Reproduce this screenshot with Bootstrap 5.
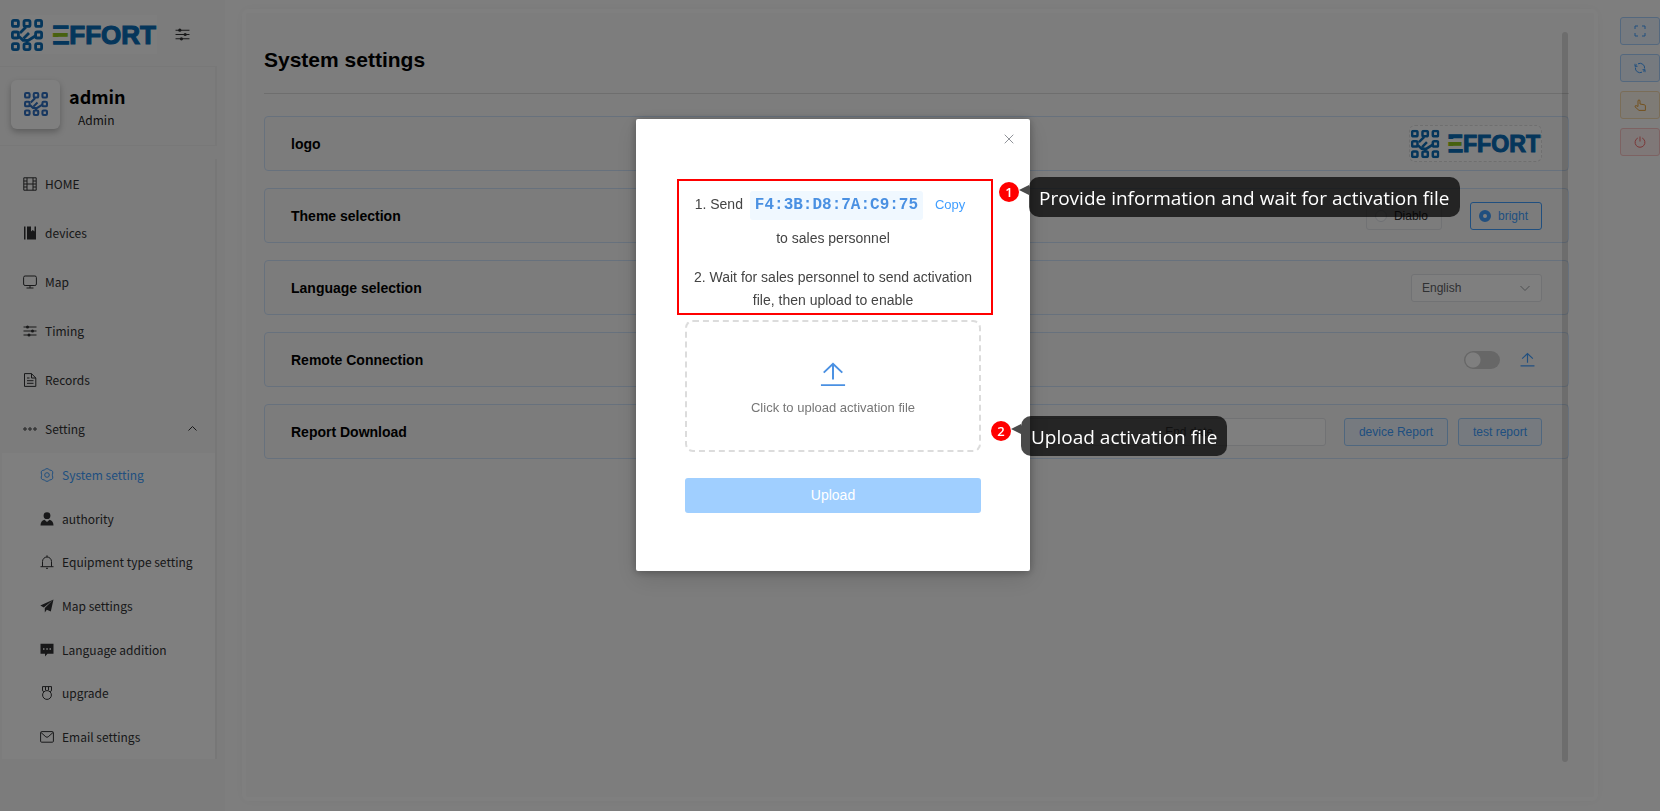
<!DOCTYPE html>
<html lang="en">
<head>
<meta charset="utf-8">
<meta name="viewport" content="width=device-width, initial-scale=1">
<title>System settings</title>
<link rel="stylesheet" href="https://cdn.jsdelivr.net/npm/bootstrap@5.3.0/dist/css/bootstrap.min.css">
<style>
  :root { --ui: "Liberation Sans", Arial, sans-serif; --side: "Noto Sans CJK SC", "Noto Sans", sans-serif; --note: "Open Sans", "Noto Sans", sans-serif; }
  body { font-family: var(--ui); font-size: 14px; line-height: 20px; color: #303133; background: #fdfdfd; }
  .ico { fill: none; stroke: currentColor; stroke-width: 1; flex: none; display: block; }

  /* sidebar */
  .side { width: 225px; flex: none; background: #f8f8f8; font-family: var(--side); font-size: 12px; }
  .side-top { height: 66px; padding: 3px 0 0 10px; gap: 18px; }
  .logo-box { background: #fdfdfd; }
  .plain-btn { border: 0; background: none; padding: 0; color: inherit; }
  .user-box { width: 217px; height: 80px; margin-bottom: 13px; padding: 0 0 0 11px; gap: 9px; border: solid #f1f1f1; border-width: 1px 2px 1px 0; }
  .avatar { width: 49px; height: 49px; margin-bottom: 4px; border-radius: 6px; background: #fff; box-shadow: 0 3px 6px rgba(0,0,0,.25); }
  .user-name { font-size: 18px; line-height: 28px; font-weight: 700; color: #000; }
  .user-role { padding-left: 9px; color: #222; line-height: 20px; }
  .menu-list { width: 217px; border-right: 2px solid #efefef; }
  .menu-link { height: 49px; padding: 0 18px 0 23px; gap: 8px; color: #303133; text-decoration: none; }
  .sub-list { margin-left: 2px; min-height: 306px; background: #fff; }
  .sub-link { padding: 0 10px 0 38px; gap: 8px; color: #303133; text-decoration: none; }
  .sub-link.on { color: #409eff; }

  /* content */
  .panel { margin: 9px 22px 10px 17px; border: 4px solid #fefefe; border-radius: 6px; background: #fbfbfb; box-shadow: 0 0 12px rgba(0,0,0,.04); padding: 19px 25px 35px 18px; }
  .scroller { position: relative; }
  .bar-thumb { position: absolute; top: 0; bottom: 0; right: 1px; width: 6px; border-radius: 3px; background: rgba(0,0,0,.13); }
  .page-title { font-size: 21px; line-height: 30px; font-weight: 700; color: #000; margin: 0 0 22px; padding: 13px 0 18px; border-bottom: 1px solid #dcdcdc; }
  .setting { min-height: 55px; margin-bottom: 17px; padding: 0 26px; border: 1px solid #cfe3fa; border-radius: 4px; background: #f9f9f9; }
  .setting h2 { font-size: 14px; line-height: 20px; font-weight: 700; color: #000; margin: 0; }
  .logo-drop { border: 1px dashed #dedede; border-radius: 6px; background: #fdfdfd; }
  .themes { gap: 28px; }
  .choice { height: 28px; padding: 0 13px 0 8px; gap: 7px; border: 1px solid #e2e4e8; border-radius: 3px; font-size: 12px; cursor: pointer; }
  .choice input { appearance: none; width: 12px; height: 12px; margin: 0; border: 1px solid #dcdfe6; border-radius: 50%; background: #fff; }
  .choice.on { border-color: #409eff; color: #409eff; }
  .choice.on input { border: 4px solid #409eff; }
  .lang { width: 131px; height: 28px; padding: 0 30px 0 10px; border: 1px solid #e2e4e8; border-radius: 3px; font-size: 12px; color: #606266; appearance: none;
    background: #fff url("data:image/svg+xml,%3Csvg xmlns='http://www.w3.org/2000/svg' width='10' height='10' fill='none' stroke='%239a9da3'%3E%3Cpath d='M.5 3 5 7.500 9.500 3'/%3E%3C/svg%3E") no-repeat right 11px center; }
  .remote { gap: 20px; padding-right: 7px; }
  .toggle { appearance: none; width: 36px; height: 18px; margin: 0; border-radius: 9px; background: radial-gradient(circle at 9px 9px, #fff 7px, #cecece 8px); }
  .up-small { stroke: #409eff; stroke-width: 2.2; }
  .dates { width: 440px; height: 28px; margin-right: 18px; padding: 0 35px 0 0; border: 1px solid #e2e4e8; border-radius: 3px; background: #fff; }
  .dates input { min-width: 0; width: 50%; border: 0; background: none; padding: 0; font-size: 12px; text-align: center; }
  .reports { gap: 10px; }
  .soft-btn { height: 28px; padding: 0 14px; border: 1px solid #9fceff; border-radius: 3px; background: #ecf5ff; color: #409eff; font-size: 12px; }

  /* quick actions on the right edge */
  .quick { width: 40px; flex: none; padding-top: 17px; gap: 9px; }
  .quick button { width: 40px; height: 28px; padding: 0; border: 1px solid #a9d1fc; border-radius: 3px; background: #ecf5ff; color: #409eff; }
  .quick .warn { border-color: #f5dab1; background: #fdf6ec; color: #e6a23c; }
  .quick .stop { border-color: #fbc4c4; background: #fef0f0; color: #f56c6c; }

  /* dialog */
  .shade { background: rgba(0,0,0,.5); padding-left: 6px; overflow: hidden; }
  .shade .modal-dialog { max-width: 394px; margin: 119px auto; }
  .shade .modal-content { border: 0; border-radius: 2px; box-shadow: 0 1px 8px rgba(0,0,0,.3), 0 8px 24px rgba(0,0,0,.12); padding: 13px 37px 58px 41px; }
  .close-x { color: #909399; margin-right: -23px; padding: 2px; }
  .guide { position: relative; margin-top: 33px; padding: 10px 12px 1px 8px; border: 2px solid #f00; font-size: 14px; line-height: 23px; color: #444; text-align: center; }
  .guide ol { list-style: none; margin: 0; padding: 0; }
  .mac { display: inline-block; margin: 0 3px 7px; padding: 3px 5px; border-radius: 3px; background: #f0f8ff; color: #4a90e2; font: 700 16px/23px "Liberation Mono", monospace; }
  .copy-btn { border: 0; background: none; padding: 0 6px 0 5px; color: #409eff; font-size: 13px; line-height: 23px; }
  .drop { position: relative; margin: 5px 12px 0 8px; }
  .drop label { height: 132px; border: 2px dashed #dcdcdc; border-radius: 8px; color: #777; font-size: 13px; cursor: pointer; padding-top: 6px; gap: 10px; }
  .up-large { stroke: #4a90e2; stroke-width: 2.1; }
  .send-btn { margin: 26px 12px 0 8px; height: 35px; padding: 0 0 2px; border: 0; border-radius: 3px; background: #a0cfff; color: #fff; }
  .pin { position: absolute; width: 20px; height: 20px; border-radius: 50%; background: #f00; color: #fff; font: 600 13px/20px var(--note); text-align: center; }
  .note { position: absolute; height: 40px; padding: 0 10px; border-radius: 10px; background: rgba(0,0,0,.71); color: #fff; font: 400 19px/42px var(--note); white-space: nowrap; }
  .note::before { content: ""; position: absolute; right: 100%; top: 8px; border: solid transparent; border-width: 5px 10px 5px 0; border-right-color: #4a4a4a; }
  .pin-1 { left: 320px; top: 1px; } .note-1 { left: 350px; top: -4px; }
  .pin-2 { left: 306px; top: 101px; } .note-2 { left: 336px; top: 96px; }
</style>
</head>
<body>
<svg width="0" height="0" class="position-absolute" aria-hidden="true">
  <defs>
    <linearGradient id="bars" gradientUnits="userSpaceOnUse" x1="0" y1="10" x2="0" y2="30">
      <stop offset="0.22" stop-color="#0b6db7"/><stop offset="0.22" stop-color="#fdfdfd"/>
      <stop offset="0.4" stop-color="#fdfdfd"/><stop offset="0.4" stop-color="#8fc31f"/>
      <stop offset="0.6" stop-color="#8fc31f"/><stop offset="0.6" stop-color="#fdfdfd"/>
      <stop offset="0.79" stop-color="#fdfdfd"/><stop offset="0.79" stop-color="#0b6db7"/>
    </linearGradient>
    <symbol id="chip" viewBox="0 0 32 32">
      <g fill="none" stroke="currentColor" stroke-width="2.800">
        <rect x="1.400" y="1.400" width="6" height="6" rx="1.500"/><rect x="13" y="1.400" width="6" height="6" rx="1.500"/><rect x="24.600" y="1.400" width="6" height="6" rx="1.500"/>
        <rect x="1.400" y="13" width="6" height="6" rx="1.500"/><rect x="24.600" y="13" width="6" height="6" rx="1.500"/>
        <rect x="1.400" y="24.600" width="6" height="6" rx="1.500"/><rect x="13" y="24.600" width="6" height="6" rx="1.500"/><rect x="24.600" y="24.600" width="6" height="6" rx="1.500"/>
        <path d="M15 8 9 14M8 17.500l4 3.800h5.500l7.100-4.500M12.500 19.500l5.500-5.500M16 24.600v-3.300"/>
      </g>
    </symbol>
    <symbol id="brand" viewBox="0 0 147 39">
      <use href="#chip" x="1" y="4" width="32" height="32" color="#0b6db7"/>
      <text x="42" y="29" font-family="Liberation Sans, Arial, sans-serif" font-weight="700" font-size="26" fill="#0b6db7"><tspan fill="url(#bars)" stroke="url(#bars)" stroke-width="1.500">E</tspan><tspan stroke="#0b6db7" stroke-width="1.200">FFORT</tspan></text>
    </symbol>
    <symbol id="sliders" viewBox="0 0 14 14">
      <path d="M.5 3h13M.5 7h13M.5 11h13"/><g fill="currentColor" stroke="none"><circle cx="4.500" cy="3" r="1.500"/><circle cx="9.500" cy="7" r="1.500"/><circle cx="6" cy="11" r="1.500"/></g>
    </symbol>
    <symbol id="up" viewBox="0 0 28 28"><path d="M14 20V3M4 12.500 14 3l10 9.500M1 26h26"/></symbol>
  </defs>
</svg>

<div class="d-flex min-vh-100">
  <aside class="side">
    <div class="side-top d-flex align-items-center">
      <div class="logo-box"><svg class="d-block" width="147" height="39" role="img" aria-label="EFFORT"><use href="#brand"/></svg></div>
      <button class="plain-btn" aria-label="Collapse menu"><svg class="ico" width="15" height="15"><use href="#sliders"/></svg></button>
    </div>
    <div class="user-box d-flex align-items-center">
      <div class="avatar d-flex align-items-center justify-content-center"><svg width="24" height="24" color="#2f6fc0"><use href="#chip"/></svg></div>
      <div><div class="user-name">admin</div><div class="user-role">Admin</div></div>
    </div>
    <nav class="menu-list" aria-label="Main">
      <a href="#" class="menu-link d-flex align-items-center"><svg class="ico" width="14" height="14" viewBox="0 0 14 14"><path d="M.8.8h12.400v12.400H.8zM4 .8v12.400M10 .8v12.400M4 7h6M.8 4H4M.8 7H4M.8 10H4M10 4h3M10 7h3M10 10h3"/></svg>HOME</a>
      <a href="#" class="menu-link d-flex align-items-center"><svg class="ico" width="14" height="14" viewBox="0 0 14 14"><g fill="currentColor" stroke="none"><path d="M1 .5h1.500v13H1zM4 .5h4v5l1.800-1.500L11.500 5.500v-5H13v13H4z"/></g></svg>devices</a>
      <a href="#" class="menu-link d-flex align-items-center"><svg class="ico" width="14" height="14" viewBox="0 0 14 14"><rect x=".6" y="1" width="12.800" height="9.500" rx="1.500"/><path d="M7 10.500V13M3.500 13h7"/></svg>Map</a>
      <a href="#" class="menu-link d-flex align-items-center"><svg class="ico" width="14" height="14"><use href="#sliders"/></svg>Timing</a>
      <a href="#" class="menu-link d-flex align-items-center"><svg class="ico" width="14" height="14" viewBox="0 0 14 14"><path d="M1.500.6h7L12.800 5v8.400H1.500zM8.500.6V5h4.300M4 5h2.500M4 7.700h6.500M4 10.300h6.500"/></svg>Records</a>
      <a href="#" class="menu-link d-flex align-items-center" aria-expanded="true"><svg class="ico" width="14" height="14" viewBox="0 0 14 14"><circle cx="2" cy="7" r="1.200"/><circle cx="7" cy="7" r="1.200"/><circle cx="12" cy="7" r="1.200"/></svg>Setting<svg class="ico ms-auto" width="9" height="9" viewBox="0 0 9 9"><path d="M.5 6.500l4-4 4 4"/></svg></a>
      <div class="sub-list d-flex flex-column">
        <a href="#" class="sub-link on d-flex flex-fill align-items-center"><svg class="ico" width="14" height="14" viewBox="0 0 14 14"><path d="M5.200 1.300Q7-.2 8.800 1.300l1 .8 1.400.2Q13.200 3 12.800 5l-.4 1.200v1.600l.4 1.200q.4 2-1.600 2.700l-1.400.2-1 .8Q7 14.200 5.200 12.700l-1-.8-1.400-.2Q.8 11 1.200 9l.4-1.200V6.200L1.200 5Q.8 3 2.800 2.300l1.400-.2z"/><circle cx="7" cy="7" r="2.300"/></svg>System setting</a>
        <a href="#" class="sub-link d-flex flex-fill align-items-center"><svg class="ico" width="14" height="14" viewBox="0 0 14 14"><g fill="currentColor" stroke="none"><circle cx="7" cy="3.700" r="3.400"/><path d="M.5 13.500q0-4.500 4-5.700L7 10l2.500-2.200q4 1.200 4 5.700z"/></g></svg>authority</a>
        <a href="#" class="sub-link d-flex flex-fill align-items-center"><svg class="ico" width="14" height="14" viewBox="0 0 14 14"><path d="M.5 11.700h13M2.500 11.700V6.500a4.500 4.500 0 0 1 9 0v5.200M7 .3V2M6 13.300h2"/></svg>Equipment type setting</a>
        <a href="#" class="sub-link d-flex flex-fill align-items-center"><svg class="ico" width="14" height="14" viewBox="0 0 14 14"><g fill="currentColor" stroke="none"><path d="M13.500.5.3 6.500l3.500 2zM13.500.5 4.800 9v4.500l2-2.700 4 1.700z"/></g></svg>Map settings</a>
        <a href="#" class="sub-link d-flex flex-fill align-items-center"><svg class="ico" width="14" height="14" viewBox="0 0 14 14"><g fill="currentColor" stroke="none"><path d="M.5.8h13v10H7.500L5 13.500v-2.700H.5z"/></g><path stroke="#fff" stroke-width="1.500" d="M3 6h1.500M6.300 6h1.500M9.500 6H11"/></svg>Language addition</a>
        <a href="#" class="sub-link d-flex flex-fill align-items-center"><svg class="ico" width="14" height="14" viewBox="0 0 14 14"><circle cx="7" cy="9" r="4.400"/><path d="M2.500.6h9v4.200L10 5.600M2.500.6v4.200L4 5.600M5.500.6v3.600M8.500.6v3.600"/></svg>upgrade</a>
        <a href="#" class="sub-link d-flex flex-fill align-items-center"><svg class="ico" width="14" height="14" viewBox="0 0 14 14"><rect x=".6" y="1.600" width="12.800" height="10.600" rx="1"/><path d="M1 2.500 5.800 6.800q1.200.9 2.400 0L13 2.500"/></svg>Email settings</a>
      </div>
    </nav>
  </aside>

  <main class="panel flex-fill d-flex">
    <div class="scroller flex-fill">
      <h1 class="page-title">System settings</h1>
      <section class="setting d-flex align-items-center justify-content-between">
        <h2>logo</h2>
        <div class="logo-drop"><svg class="d-block" width="131" height="35" role="img" aria-label="EFFORT"><use href="#brand"/></svg></div>
      </section>
      <section class="setting d-flex align-items-center justify-content-between">
        <h2>Theme selection</h2>
        <div class="themes d-flex">
          <label class="choice d-flex align-items-center"><input type="radio" name="theme">Diablo</label>
          <label class="choice on d-flex align-items-center"><input type="radio" name="theme" checked>bright</label>
        </div>
      </section>
      <section class="setting d-flex align-items-center justify-content-between">
        <h2><label for="lang">Language selection</label></h2>
        <select id="lang" class="lang"><option>English</option></select>
      </section>
      <section class="setting d-flex align-items-center justify-content-between">
        <h2><label for="remote">Remote Connection</label></h2>
        <div class="remote d-flex align-items-center">
          <input id="remote" class="toggle" type="checkbox" role="switch">
          <button class="plain-btn" aria-label="Upload"><svg class="ico up-small" width="15" height="15"><use href="#up"/></svg></button>
        </div>
      </section>
      <section class="setting d-flex align-items-center justify-content-between">
        <h2>Report Download</h2>
        <div class="d-flex">
          <div class="dates d-flex"><input type="text" placeholder="Start date" aria-label="Start date"><input type="text" placeholder="End date" aria-label="End date"></div>
          <div class="reports d-flex">
            <button class="soft-btn">device Report</button>
            <button class="soft-btn">test report</button>
          </div>
        </div>
      </section>
      <div class="bar-thumb"></div>
    </div>
  </main>

  <div class="quick d-flex flex-column">
    <button aria-label="Full screen"><svg class="ico mx-auto" width="12" height="12" viewBox="0 0 12 12"><path d="M1 4V1h3M8 1h3v3M11 8v3H8M4 11H1V8"/></svg></button>
    <button aria-label="Refresh"><svg class="ico mx-auto" width="12" height="12" viewBox="0 0 12 12"><path d="M4 1.800A4.600 4.600 0 0 1 10.600 6.500M8 10.200A4.600 4.600 0 0 1 1.400 5.500M1.200 4.200A4.600 4.600 0 0 1 2.800 2.600M1 1.800V4.300H3.500M10.800 7.800A4.600 4.600 0 0 1 9.200 9.400M11 10.200V7.700H8.500"/></svg></button>
    <button class="warn" aria-label="Guide"><svg class="ico mx-auto" width="12" height="12" viewBox="0 0 12 12"><path d="M4 7.500V1.500q1-1.200 2 0V5l4.500.8q.9.200.9 1.200v4.400H5L1 7.800Q.8 6.500 2.200 6.600L4 7.500"/></svg></button>
    <button class="stop" aria-label="Log out"><svg class="ico mx-auto" width="12" height="12" viewBox="0 0 12 12"><path d="M3.800 2a4.900 4.900 0 1 0 4.400 0M6 .5v5"/></svg></button>
  </div>
</div>

<div class="modal shade d-block" role="dialog" aria-label="Activation">
  <div class="modal-dialog">
    <div class="modal-content">
      <button class="plain-btn close-x align-self-end" aria-label="Close"><svg class="ico" width="10" height="10" viewBox="0 0 10 10"><path d="M.7.7l8.600 8.600M9.300.7.7 9.300"/></svg></button>
      <div class="guide">
        <ol>
          <li class="mb-3">1. Send <span class="mac">F4:3B:D8:7A:C9:75</span> <button class="copy-btn">Copy</button><br>to sales personnel</li>
          <li>2. Wait for sales personnel to send activation file, then upload to enable</li>
        </ol>
        <span class="pin pin-1">1</span><span class="note note-1" role="note">Provide information and wait for activation file</span>
      </div>
      <div class="drop">
        <input id="act" type="file" class="visually-hidden">
        <label for="act" class="d-flex flex-column align-items-center justify-content-center"><svg class="ico up-large" width="26" height="28"><use href="#up"/></svg>Click to upload activation file</label>
        <span class="pin pin-2">2</span><span class="note note-2" role="note">Upload activation file</span>
      </div>
      <button class="send-btn" disabled>Upload</button>
    </div>
  </div>
</div>
<script src="https://cdn.jsdelivr.net/npm/bootstrap@5.3.0/dist/js/bootstrap.bundle.min.js"></script>
</body>
</html>
